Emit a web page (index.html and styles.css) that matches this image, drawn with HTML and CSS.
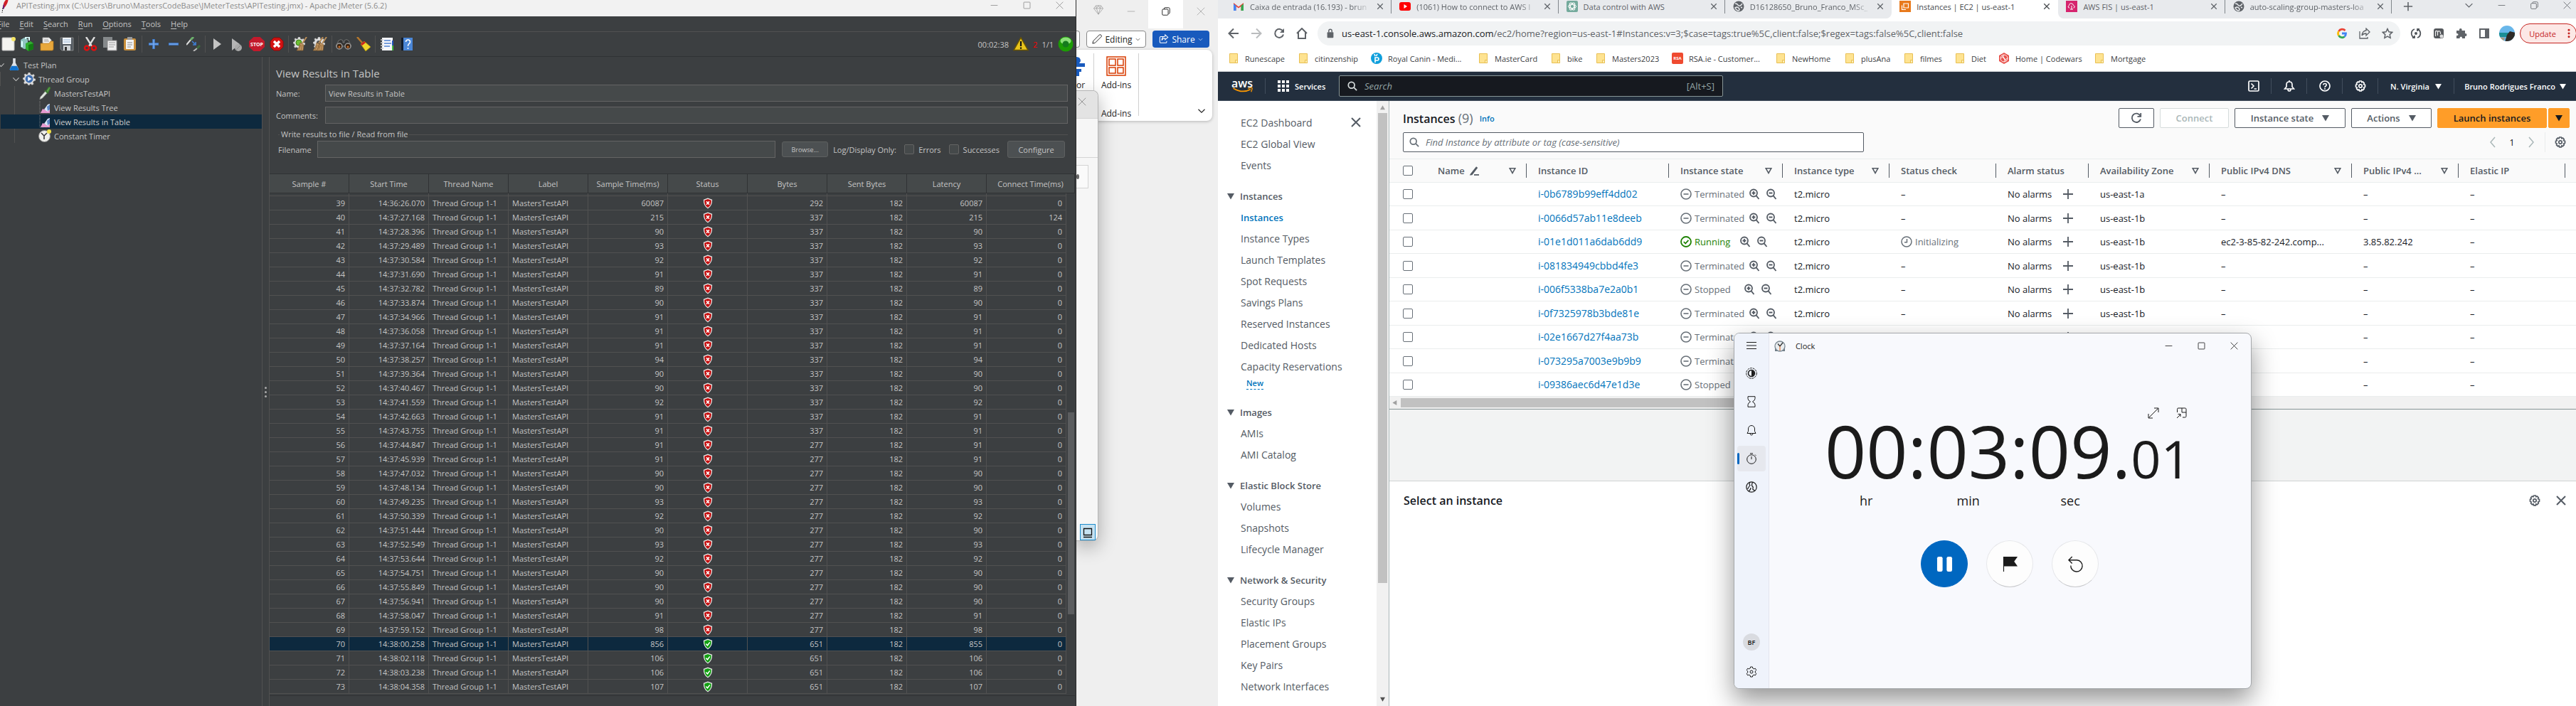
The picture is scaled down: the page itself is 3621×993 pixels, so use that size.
FILE: index.html
```html
<!DOCTYPE html>
<html lang="en">
<head>
<meta charset="utf-8">
<title>Desktop</title>
<link rel="stylesheet" href="styles.css">
</head>
<body>
<svg class="sprite" aria-hidden="true">
  <symbol id="i-x" viewBox="0 0 16 16"><path d="M2 2l12 12M14 2L2 14" fill="none" stroke="currentColor"/></symbol>
  <symbol id="i-xb" viewBox="0 0 16 16"><path d="M2 2l12 12M14 2L2 14" fill="none" stroke="currentColor" stroke-width="2"/></symbol>
  <symbol id="i-min" viewBox="0 0 16 16"><path d="M2 8h12" fill="none" stroke="currentColor"/></symbol>
  <symbol id="i-max" viewBox="0 0 16 16"><rect x="2.500" y="2.500" width="11" height="11" rx="1" fill="none" stroke="currentColor"/></symbol>
  <symbol id="i-restore" viewBox="0 0 16 16"><path d="M5 4.500V3.500Q5 2 6.500 2H12Q14 2 14 4v6q0 1.500-1.500 1.500" fill="none" stroke="currentColor"/><rect x="2" y="4.500" width="9.500" height="9.500" rx="1.500" fill="none" stroke="currentColor"/></symbol>
  <symbol id="i-chev" viewBox="0 0 16 16"><path d="M2 5l6 6 6-6" fill="none" stroke="currentColor" stroke-width="1.500"/></symbol>
  <symbol id="i-left" viewBox="0 0 16 16"><path d="M11 1L5 8l6 7" fill="none" stroke="currentColor" stroke-width="1.500"/></symbol>
  <symbol id="i-right" viewBox="0 0 16 16"><path d="M5 1l6 7-6 7" fill="none" stroke="currentColor" stroke-width="1.500"/></symbol>
  <symbol id="i-tri" viewBox="0 0 10 10"><path d="M0 1h10L5 9.500z" fill="currentColor"/></symbol>
  <symbol id="i-sort" viewBox="0 0 10 10"><path d="M1.200 1.800h7.600L5 8.500z" fill="none" stroke="currentColor" stroke-width="1.600"/></symbol>
  <symbol id="i-search" viewBox="0 0 16 16"><circle cx="6.500" cy="6.500" r="5" fill="none" stroke="currentColor" stroke-width="2"/><path d="M10.200 10.200L15 15" stroke="currentColor" stroke-width="2"/></symbol>
  <symbol id="i-gear" viewBox="0 0 16 16"><path d="M6.700 1h2.600l.5 1.700 1.600-.6 1.900 1.900-.7 1.600 1.900.8v2.900l-1.900.8.700 1.700-1.900 1.900-1.600-.7-.5 1.900H6.700l-.7-1.900-1.600.7-1.900-1.900.7-1.700-1.700-.8V6.400l1.700-.8-.7-1.600 1.900-1.900 1.600.6z" fill="none" stroke="currentColor" stroke-width="1.700"/><circle cx="8" cy="8" r="2.200" fill="none" stroke="currentColor" stroke-width="1.700"/></symbol>
  <symbol id="i-zin" viewBox="0 0 16 16"><circle cx="7" cy="6.500" r="5" fill="none" stroke="currentColor" stroke-width="1.800"/><path d="M10.500 10.200L14.500 15M4.500 6.500h5M7 4v5" stroke="currentColor" stroke-width="1.800"/></symbol>
  <symbol id="i-zout" viewBox="0 0 16 16"><circle cx="7" cy="6.500" r="5" fill="none" stroke="currentColor" stroke-width="1.800"/><path d="M10.500 10.200L14.500 15M4.500 6.500h5" stroke="currentColor" stroke-width="1.800"/></symbol>
  <symbol id="i-minus-c" viewBox="0 0 16 16"><circle cx="8" cy="8" r="7" fill="none" stroke="currentColor" stroke-width="1.600"/><path d="M4.500 8h7" stroke="currentColor" stroke-width="1.600"/></symbol>
  <symbol id="i-ok-c" viewBox="0 0 16 16"><circle cx="8" cy="8" r="7" fill="none" stroke="currentColor" stroke-width="1.800"/><path d="M4.800 8l2.400 2.500 4.200-4.700" fill="none" stroke="currentColor" stroke-width="1.800"/></symbol>
  <symbol id="i-clk-c" viewBox="0 0 16 16"><circle cx="8" cy="8" r="7" fill="none" stroke="currentColor" stroke-width="1.500"/><path d="M8.500 4v4.800H5" fill="none" stroke="currentColor" stroke-width="1.500"/></symbol>
  <symbol id="i-plus" viewBox="0 0 16 16"><path d="M8 1v14M1 8h14" stroke="currentColor" stroke-width="1.800"/></symbol>
  <symbol id="i-refresh" viewBox="0 0 16 16"><path d="M13.500 4.800A6.200 6.200 0 1 0 14 9.500" fill="none" stroke="currentColor" stroke-width="1.800"/><path d="M14.200 1v4.800H9.500" fill="none" stroke="currentColor" stroke-width="1.800"/></symbol>
  <symbol id="i-folder" viewBox="0 0 12 14"><path d="M.500.500h11v13H.500z" fill="#fee391" stroke="#e8bf52"/><path d="M8.500 13.500v-4h2l1 1.500v2.500z" fill="#fff0b8" stroke="#e8bf52"/></symbol>
  <symbol id="i-globe" viewBox="0 0 16 16"><circle cx="8" cy="8" r="7.500" fill="#5f6368"/><path d="M3 4q3 0 4 2t3 1 3-3M9 12q-1-3-4-3l-2 1q1 3 4 4 2 0 2-2zM11 9l2 1" fill="none" stroke="#e8eaed" stroke-width="1.500"/></symbol>
  <symbol id="i-bad" viewBox="0 0 16 18"><path d="M8 .500L15 3q.5 10-7 14.500Q.500 13 1 3z" fill="#e6e6e6"/><path d="M8 2.200L13.500 4q.3 8-5.500 11.800Q2.200 12 2.500 4z" fill="#c40d0d"/><path d="M5.700 6l4.600 5M10.300 6l-4.600 5" stroke="#fff" stroke-width="1.800"/></symbol>
  <symbol id="i-good" viewBox="0 0 16 18"><path d="M8 .500L15 3q.5 10-7 14.500Q.500 13 1 3z" fill="#e6e6e6"/><path d="M8 2.200L13.500 4q.3 8-5.500 11.800Q2.200 12 2.500 4z" fill="#12a012"/><path d="M5 8.500l2.400 2.500L11.200 6" fill="none" stroke="#fff" stroke-width="1.800"/></symbol>
  <symbol id="i-broom" viewBox="0 0 20 20"><path d="M19 0l-6 9" stroke="#b98d58" stroke-width="2"/><path d="M10 8l5 3-1 8H5q4-4 5-11z" fill="#c29763" stroke="#80592c" stroke-width=".7"/><path d="M11 11L8 18M13 11l-2 8" stroke="#8b6234" stroke-width=".8"/></symbol>
  <symbol id="i-cog" viewBox="0 0 20 20"><path d="M8.500 0h3l.6 2.800 2.300 1L17 2.500l1.500 2.500-1.800 2.200.6 2.100L20 10v2.500l-2.800.9-1.200 2 1 2.600-2.400 1.500-2.200-1.700-1.200.2L10.500 20h-2l-.9-2.200-2-.8L3 18l-1.500-2 1.300-2.600-.8-1.900L0 10.500v-2l2.400-.9.700-2L2 3.300 4 2l2.200 1.400 1.600-.7z" fill="#dedede" stroke="#8b8b8b" stroke-width=".6"/></symbol>
  <symbol id="i-graph" viewBox="0 0 18 18"><path d="M2 0v17h15" fill="none" stroke="#888" stroke-dasharray="1 1"/><path d="M3 17l3-6 4 2 3-4 3 2v6z" fill="#e79ad0"/><path d="M8 12L13 5l3-1v8l-3 3z" fill="#dbeafa"/><path d="M12 8l4-3v7l-3 2z" fill="#5c86c7"/></symbol>
  <symbol id="i-dropper" viewBox="0 0 18 20"><path d="M1 20l1-4L10 7l3 2.500L5 18z" fill="#dfe6df" stroke="#888" stroke-width=".7"/><path d="M8.500 5.500L14 10.500M11 7l4-6q2-1 2.500 1L14 9z" fill="#5ea04c" stroke="#3c7a32" stroke-width="1.300"/></symbol>
</svg>

<main class="desktop">
<!-- Apache JMeter -->
<section class="jm" aria-label="Apache JMeter">
  <header class="jm-title">
    <svg class="feather" viewBox="0 0 12 22"><path d="M10 0q3 0 0 7-3 6-6 7 0-9 6-14z" fill="#d22128"/><path d="M6 7q-3 4-2 8l2-1z" fill="#6d2077"/><path d="M4 13l-1 7" stroke="#333" stroke-dasharray="2 1"/></svg>
    <span class="jm-title-text">APITesting.jmx (C:\Users\Bruno\MastersCodeBase\JMeterTests\APITesting.jmx) - Apache JMeter (5.6.2)</span>
    <div class="win-btns"><button aria-label="Minimize"><svg><use href="#i-min"/></svg></button><button aria-label="Maximize"><svg><use href="#i-max"/></svg></button><button aria-label="Close"><svg><use href="#i-x"/></svg></button></div>
  </header>
  <nav class="jm-menu"><button><u>F</u>ile</button><button><u>E</u>dit</button><button><u>S</u>earch</button><button><u>R</u>un</button><button><u>O</u>ptions</button><button><u>T</u>ools</button><button><u>H</u>elp</button></nav>
  <div class="jm-tools">
    <button aria-label="New"><svg viewBox="0 0 20 20"><rect x="1" y="1" width="17" height="18" rx="1" fill="#f4f4f0" stroke="#bbb"/><circle cx="17" cy="3" r="3" fill="#f5e663"/></svg></button>
    <button aria-label="Templates"><svg viewBox="0 0 20 20"><path d="M1 4l5-3 5 2v13l-5 1-5-3z" fill="#8fc4c0"/><path d="M8 9l7-3 4 3v8l-7 3-4-3z" fill="#2fae2f"/><path d="M12 11l7-2v8l-7 3z" fill="#137a13"/><path d="M3 6v8M8 3V1l5-1v5" stroke="#dff" stroke-width="2" fill="none"/></svg></button>
    <button aria-label="Open"><svg viewBox="0 0 20 20"><path d="M4 1h9l3 3v8H4z" fill="#f3f3f3" stroke="#aaa"/><path d="M6 4h6M6 6h7" stroke="#999"/><path d="M1 9h12l2-3h4v11q0 2-2 2H1z" fill="#e8a83c" stroke="#b97a18" stroke-width=".7"/></svg></button>
    <button aria-label="Save"><svg viewBox="0 0 20 20"><path d="M1 1h18v18H3l-2-2z" fill="#555c63" stroke="#999" stroke-width=".7"/><rect x="4" y="1" width="12" height="9" fill="#f0f4f8"/><path d="M5 4h10M5 7h10" stroke="#9bb8d8"/><rect x="5" y="12" width="10" height="7" fill="#cfd3d6"/><rect x="7" y="14" width="3" height="5" fill="#333"/></svg></button>
    <i></i>
    <button aria-label="Cut"><svg viewBox="0 0 20 20"><path d="M4 0q4 6 8 13M16 0q-4 6-8 13" stroke="#ddd" stroke-width="2.400" fill="none"/><circle cx="5" cy="15.500" r="3" fill="none" stroke="#d11" stroke-width="2.500"/><circle cx="15" cy="15.500" r="3" fill="none" stroke="#d11" stroke-width="2.500"/></svg></button>
    <button aria-label="Copy"><svg viewBox="0 0 20 20"><rect x="0" y="0" width="13" height="15" fill="#85898b"/><path d="M6 5h13v14H6z" fill="#eee" stroke="#888"/><path d="M8 8h9M8 11h9M8 14h7" stroke="#999"/></svg></button>
    <button aria-label="Paste"><svg viewBox="0 0 20 20"><rect x="1" y="2" width="17" height="17" rx="2" fill="#c98f3c"/><rect x="4" y="4" width="11" height="13" fill="#f4f4f4"/><rect x="6" y="0" width="7" height="4" fill="#999"/><path d="M6 8h7M6 11h7M6 14h5" stroke="#888"/></svg></button>
    <i></i>
    <button aria-label="Expand"><svg viewBox="0 0 20 20"><path d="M10 3v14M3 10h14" stroke="#3f7fd4" stroke-width="3.500"/><path d="M10 4v12M4 10h12" stroke="#8fb9f0"/></svg></button>
    <button aria-label="Collapse"><svg viewBox="0 0 20 20"><path d="M3 10h14" stroke="#3f7fd4" stroke-width="3.500"/><path d="M4 10h12" stroke="#8fb9f0"/></svg></button>
    <button aria-label="Toggle"><svg viewBox="0 0 20 20"><path d="M0 11L6 4" stroke="#ddd" stroke-width="2"/><path d="M6 4l4-4" stroke="#6bb06b" stroke-width="3"/><path d="M8 6l5 5M13 7v4H9" stroke="#3f7fd4" stroke-width="1.600" fill="none"/><path d="M10 20l5-4" stroke="#bbb" stroke-width="2"/><path d="M15 16l4-4" stroke="#3c6b3c" stroke-width="3"/></svg></button>
    <i></i>
    <button aria-label="Start"><svg viewBox="0 0 20 20"><path d="M5 2l11 8-11 8z" fill="#c4c4c4"/></svg></button>
    <button aria-label="Start no pauses"><svg viewBox="0 0 20 20"><path d="M3 2l11 8-11 9z" fill="#b5b5b5"/><circle cx="12" cy="15" r="5" fill="#aaa"/><path d="M9 18l6-6" stroke="#888"/></svg></button>
    <button aria-label="Stop"><svg class="wide" viewBox="0 0 22 20"><path d="M6.500 0h9L22 6v8l-6.500 6h-9L0 14V6z" fill="#c31a2c"/><text x="11" y="13" text-anchor="middle" class="stop-t">STOP</text></svg></button>
    <button aria-label="Shutdown"><svg viewBox="0 0 20 20"><path d="M6 1h8l5 5v8l-5 5H6l-5-5V6z" fill="#d31212" stroke="#8d0808"/><path d="M6 6l8 8M14 6l-8 8" stroke="#fff" stroke-width="3.500"/></svg></button>
    <i></i>
    <button aria-label="Clear"><svg viewBox="0 0 20 20"><use href="#i-cog" width="17" height="17"/><circle cx="8" cy="8" r="4" fill="#6cbf34" stroke="#3d7c14"/><use href="#i-broom"/></svg></button>
    <button aria-label="Clear all"><svg viewBox="0 0 20 20"><use href="#i-cog" width="17" height="17"/><circle cx="8" cy="8" r="3" fill="#555"/><use href="#i-broom" x="-5"/><use href="#i-broom"/></svg></button>
    <i></i>
    <button aria-label="Search"><svg class="wide" viewBox="0 0 22 20"><path d="M4 5q3-3 6 0v3h2V5q3-3 6 0l4 8H0z" fill="#333" stroke="#888" stroke-width=".7"/><circle cx="5" cy="13" r="4" fill="#3b2412" stroke="#999" stroke-width="1.500"/><circle cx="17" cy="13" r="4" fill="#3b2412" stroke="#999" stroke-width="1.500"/><circle cx="5" cy="14" r="1.500" fill="#c86f2c"/><circle cx="17" cy="14" r="1.500" fill="#c86f2c"/></svg></button>
    <button aria-label="Reset search"><svg viewBox="0 0 20 20"><path d="M1 0l7 8" stroke="#b5772c" stroke-width="2.500"/><path d="M6 10l5-4 9 8-7 6z" fill="#efd62b" stroke="#a98d00" stroke-width=".7"/><path d="M6 10l5-4 2 2-5 4z" fill="#c22"/></svg></button>
    <i></i>
    <button aria-label="Function helper"><svg viewBox="0 0 20 20"><rect x="3" y="1" width="15" height="18" fill="#f6f8fc"/><path d="M6 5h9M6 9h10M6 13h8" stroke="#4c7fd0" stroke-width="1.500"/><path d="M1 4h4M1 8h4M1 12h4M1 16h4" stroke="#ccc" stroke-width="1.500"/><path d="M18 5v7" stroke="#2255bb" stroke-width="2"/><path d="M18 12v7" stroke="#4b4" stroke-width="2"/></svg></button>
    <button aria-label="Help"><svg viewBox="0 0 20 20"><path d="M2 1h16v18H2z" fill="#4a86d6"/><path d="M2 1h3v18H2z" fill="#111d2e"/><path d="M8.500 7q0-3 3-3t3 3q0 2-2 3-1 1-1 3" fill="none" stroke="#fff" stroke-width="1.500"/><circle cx="11.500" cy="16" r="1" fill="#fff"/></svg></button>
    <div class="jm-stat"><span>00:02:38</span>
      <svg viewBox="0 0 22 20"><path d="M11 1l10 17.500H1z" fill="#e8c41c" stroke="#6b5500" stroke-width="1.500"/><path d="M11 6v7M11 14.500v2.200" stroke="#111" stroke-width="2.200"/></svg>
      <span class="err">2</span><span>1/1</span>
      <svg class="led" viewBox="0 0 22 22"><circle cx="11" cy="11" r="10.500" fill="#1c9c05"/><ellipse cx="11" cy="6.500" rx="7.500" ry="5" fill="#8be079"/><circle cx="11" cy="11" r="4.500" fill="#157a1e"/></svg>
    </div>
  </div>
  <div class="jm-body">
    <ul class="tree">
      <li class="d0"><svg class="tw"><use href="#i-chev"/></svg><svg viewBox="0 0 16 20"><path d="M6 0h4v7l5 10q0 2-2 2H3q-2 0-2-2l5-10z" fill="#dfe3e8"/><path d="M4 12h8l3 5q0 2-2 2H3q-2 0-2-2z" fill="#1173cf"/></svg>Test Plan</li>
      <li class="d1"><svg class="tw"><use href="#i-chev"/></svg><svg viewBox="0 0 20 20"><use href="#i-cog"/><circle cx="10" cy="10" r="6" fill="#3d6db0"/><path d="M8 6.500l6 3.500-6 3.500z" fill="#e8f0fa"/></svg>Thread Group</li>
      <li class="d2"><svg><use href="#i-dropper"/></svg>MastersTestAPI</li>
      <li class="d2"><svg><use href="#i-graph"/></svg>View Results Tree</li>
      <li class="d2 on"><svg><use href="#i-graph"/></svg>View Results in Table</li>
      <li class="d2"><svg viewBox="0 0 18 18"><circle cx="8.500" cy="9.500" r="8" fill="#efefec" stroke="#8a8a8a"/><path d="M4 5l4 4v5M8 9l4-4" stroke="#333" stroke-width="1.500" fill="none"/><circle cx="15" cy="3" r="3" fill="#efe04a"/></svg>Constant Timer</li>
    </ul>
    <div class="grip"><i></i><i></i><i></i></div>
    <div class="jm-main">
      <h1>View Results in Table</h1>
      <div class="frow"><label for="nm">Name:</label><input id="nm" value="View Results in Table"></div>
      <div class="frow"><label for="cm">Comments:</label><input id="cm"></div>
      <fieldset class="wr"><legend>Write results to file / Read from file</legend>
        <label for="fn">Filename</label><input id="fn" class="fn"><button class="jbtn small">Browse...</button>
        <span class="log">Log/Display Only:</span>
        <label class="ck"><input type="checkbox">Errors</label><label class="ck">
        <input type="checkbox">Successes</label><button class="jbtn">Configure</button>
      </fieldset>
      <div class="res-wrap">
        <table class="res"><colgroup><col><col><col><col><col><col><col><col><col><col><col class="sb"></colgroup>
          <thead><tr><th>Sample #</th><th>Start Time</th><th>Thread Name</th><th>Label</th><th>Sample Time(ms)</th><th>Status</th><th>Bytes</th><th>Sent Bytes</th><th>Latency</th><th colspan="2" class="last">Connect Time(ms)</th></tr></thead>
          <tbody id="samples"></tbody>
        </table>
        <div class="res-thumb"></div>
      </div>
    </div>
  </div>
</section>

<!-- Word window behind -->
<section class="word" aria-label="Word">
  <div class="w-title"><svg class="gem" viewBox="0 0 16 16"><path d="M4 1h8l3.500 4.500L8 15 .5 5.500zM.5 5.500h15M5 5.500L8 15l3-9.500L8 1zM4 1l1 4.500M12 1l-1 4.500" fill="none" stroke="#999" stroke-width=".8"/></svg><button aria-label="Minimize"><svg><use href="#i-min"/></svg></button><button class="lit" aria-label="Restore"><svg><use href="#i-restore"/></svg></button><button aria-label="Close"><svg><use href="#i-x"/></svg></button></div>
  <div class="w-bar"><button class="stub" aria-label="Comments"></button><button class="edit"><svg viewBox="0 0 16 16"><path d="M1 15l1-4L12 1q2-.5 3 1t0 2L5 14z" fill="none" stroke="#222" stroke-width="1.100"/></svg>Editing<svg class="cv"><use href="#i-chev"/></svg></button><button class="share"><svg viewBox="0 0 16 16"><path d="M7 4H3q-1.500 0-1.500 1.500v7Q1.500 14 3 14h8q1.500 0 1.500-1.500V11M10 1l4.500 4L10 9V6.500Q6 6.500 4.500 10 5 4 10 3.500z" fill="none" stroke="#fff" stroke-width="1.200"/></svg>Share<svg class="cv"><use href="#i-chev"/></svg></button></div>
  <div class="w-ribbon">
    <div class="w-ed"><svg viewBox="0 0 12 28"><path d="M0 1q6 0 6 6l-2 3h8v5H0zM0 18h7v4H4v6H0z" fill="#185abd"/></svg><span>or</span></div>
    <div class="w-add"><svg viewBox="0 0 28 28"><path d="M1 1h26v26H1zM4 4h9v9H4zM16 4h8v9h-8zM4 16h9v8H4zM16 16h8v8h-8z" fill="none" stroke="#d83b01" stroke-width="1.500"/></svg><span>Add-ins</span><span class="g">Add-ins</span></div>
    <svg class="w-chev"><use href="#i-chev"/></svg>
  </div>
  <div class="pop"><div class="pop-h"><svg><use href="#i-x"/></svg></div><div class="pop-l"></div><div class="pop-b"><i></i></div><button class="pop-k" aria-label="Display"><svg viewBox="0 0 16 16"><path d="M2.500 2.500h11v9h-11zM2 14.500h12" fill="none" stroke="#111" stroke-width="1.300"/></svg></button></div>
</section>

<!-- Chrome -->
<section class="chrome" aria-label="Chrome">
  <div class="tabstrip">
    <div class="tabs">
      <div class="tab"><svg viewBox="0 0 16 16"><path d="M1 14V3l7 5.500L15 3v11h-3.500V8L8 10.500 4.500 8v6z" fill="#ea4335"/><path d="M1 4.500V14h3.500V7z" fill="#4285f4"/><path d="M15 4.500V14h-3.500V7z" fill="#34a853"/></svg><span class="fade">Caixa de entrada (16.193) - brun</span><button aria-label="Close tab"><svg><use href="#i-xb"/></svg></button></div>
      <div class="tab"><svg viewBox="0 0 16 16"><rect y="2" width="16" height="12" rx="3" fill="#f00"/><path d="M6.500 5v6l4.500-3z" fill="#fff"/></svg><span class="fade">(1061) How to connect to AWS I</span><button aria-label="Close tab"><svg><use href="#i-xb"/></svg></button></div>
      <div class="tab"><svg viewBox="0 0 16 16"><rect width="16" height="16" rx="2" fill="#74aa9c"/><g fill="none" stroke="#fff"><ellipse cx="8" cy="8" rx="5.500" ry="2.700"/><ellipse cx="8" cy="8" rx="5.500" ry="2.700" transform="rotate(60 8 8)"/><ellipse cx="8" cy="8" rx="5.500" ry="2.700" transform="rotate(120 8 8)"/></g></svg><span>Data control with AWS</span><button aria-label="Close tab"><svg><use href="#i-xb"/></svg></button></div>
      <div class="tab nosep"><svg><use href="#i-globe"/></svg><span class="fade">D16128650_Bruno_Franco_MSc_</span><button aria-label="Close tab"><svg><use href="#i-xb"/></svg></button></div>
      <div class="tab active"><svg viewBox="0 0 16 16"><rect width="16" height="16" fill="#e8791b"/><path d="M6 4h6.500v6H6zM9 12.500H3.500v-6" fill="none" stroke="#fff" stroke-width="1.200"/></svg><span>Instances | EC2 | us-east-1</span><button aria-label="Close tab"><svg><use href="#i-xb"/></svg></button></div>
      <div class="tab"><svg viewBox="0 0 16 16"><rect width="16" height="16" fill="#d6246e"/><path d="M5 10H4q-2-2 .5-3.500Q5 3 8 4q2 0 2.500 2.500 3 1 1 3.500h-1M8 7v5M6 12h4" fill="none" stroke="#fff"/></svg><span>AWS FIS | us-east-1</span><button aria-label="Close tab"><svg><use href="#i-xb"/></svg></button></div>
      <div class="tab"><svg><use href="#i-globe"/></svg><span class="fade">auto-scaling-group-masters-loa</span><button aria-label="Close tab"><svg><use href="#i-xb"/></svg></button></div>
    </div>
    <button class="newtab" aria-label="New tab"><svg><use href="#i-plus"/></svg></button>
    <div class="win-btns"><button aria-label="Search tabs"><svg><use href="#i-chev"/></svg></button><button aria-label="Minimize"><svg><use href="#i-min"/></svg></button><button aria-label="Restore"><svg><use href="#i-restore"/></svg></button><button aria-label="Close"><svg><use href="#i-x"/></svg></button></div>
  </div>
  <div class="navbar">
    <button aria-label="Back"><svg viewBox="0 0 16 16"><path d="M15 8H2M8 1.500L1.500 8 8 14.500" fill="none" stroke="#5f6368" stroke-width="2"/></svg></button>
    <button aria-label="Forward"><svg viewBox="0 0 16 16"><path d="M1 8h13M8 1.500L14.500 8 8 14.500" fill="none" stroke="#babcbe" stroke-width="2"/></svg></button>
    <button aria-label="Reload"><svg viewBox="0 0 16 16"><path d="M13.500 5A6 6 0 1 0 14 9.500" fill="none" stroke="#5f6368" stroke-width="2"/><path d="M15 1v6H9z" fill="#5f6368"/></svg></button>
    <button aria-label="Home"><svg viewBox="0 0 16 16"><path d="M1 8l7-7 7 7M3 6.500V15h10V6.500" fill="none" stroke="#5f6368" stroke-width="2"/></svg></button>
    <div class="omni">
      <svg class="lock" viewBox="0 0 12 16"><rect x="1" y="6" width="10" height="9" rx="1" fill="#5f6368"/><path d="M3.500 6V4a2.500 2.500 0 0 1 5 0v2" fill="none" stroke="#5f6368" stroke-width="1.700"/></svg>
      <span class="url"><b>us-east-1.console.aws.amazon.com</b>/ec2/home?region=us-east-1#Instances:v=3;$case=tags:true%5C,client:false;$regex=tags:false%5C,client:false</span>
      <button aria-label="Google"><svg viewBox="0 0 16 16"><g fill="none" stroke-width="2.800"><path d="M12.500 4A5.500 5.500 0 0 0 3.500 5" stroke="#ea4335"/><path d="M3.500 5a5.500 5.500 0 0 0 0 6" stroke="#fbbc05"/><path d="M3.500 11a5.500 5.500 0 0 0 8.200 1.500" stroke="#34a853"/><path d="M8 8h5.500q0 3-1.800 4.500" stroke="#4285f4"/></g></svg></button>
      <button aria-label="Share"><svg viewBox="0 0 16 16"><path d="M1 5v10h11v-2M15 6l-5-5v3Q5 4 4 11q2-3 6-3v3z" fill="none" stroke="#5f6368" stroke-width="1.300"/></svg></button>
      <button aria-label="Bookmark"><svg viewBox="0 0 16 16"><path d="M8 1.500l2 4.300 4.700.6-3.500 3.200.9 4.700L8 12l-4.100 2.300.9-4.700L1.300 6.400 6 5.800z" fill="none" stroke="#5f6368" stroke-width="1.500"/></svg></button>
    </div>
    <div class="exts">
      <button aria-label="Sync"><svg viewBox="0 0 16 16"><path d="M6 2a6.300 6.300 0 0 0-1 11.500M3 14h3v-3M10 14a6.300 6.300 0 0 0 1-11.500M13 2h-3v3" fill="none" stroke="#50545a" stroke-width="1.800"/><circle cx="8" cy="8" r="2" fill="#50545a"/></svg></button>
      <button aria-label="Extension"><svg viewBox="0 0 16 16"><rect x="1" y="1" width="14" height="14" rx="3" fill="#55585c"/><path d="M3.500 12V5q3-2 3 2v4V6q3-3 4 1v2" fill="none" stroke="#eee" stroke-width="1.200"/><circle cx="12" cy="12" r="2.500" fill="#ddd"/></svg></button>
      <button aria-label="Extensions"><svg viewBox="0 0 16 16"><path d="M1 4h4q-.5-3 1.800-3T8.500 4H13v4.200q2.500-.5 2.500 1.800T13 11.800V15H9q.3-2.500-1.700-2.500T5.500 15H1v-4q2.500.3 2.500-1.500T1 8z" fill="#5f6368"/></svg></button>
      <button aria-label="Side panel"><svg viewBox="0 0 16 16"><path d="M2 2h12v12H2z" fill="none" stroke="#5f6368" stroke-width="2"/><path d="M9 2h5v12H9z" fill="#5f6368"/></svg></button>
      <button aria-label="Profile"><svg class="ava" viewBox="0 0 24 24"><clipPath id="av"><circle cx="12" cy="12" r="11"/></clipPath><g clip-path="url(#av)"><path d="M0 0h24v24H0z" fill="#69b7ea"/><path d="M0 11h24v6H0z" fill="#1b8e95"/><path d="M9 24l3-10 4-5 8 2v13z" fill="#2f2c28"/><path d="M0 17l9 1-2 6H0z" fill="#a79b82"/></g></svg></button>
      <button class="update">Update<svg viewBox="0 0 4 16"><circle cx="2" cy="2.500" r="1.700"/><circle cx="2" cy="8" r="1.700"/><circle cx="2" cy="13.500" r="1.700"/></svg></button>
    </div>
  </div>
  <nav class="marks">
    <a href="#"><svg><use href="#i-folder"/></svg>Runescape</a>
    <a href="#"><svg><use href="#i-folder"/></svg>citinzenship</a>
    <a href="#" class="fav"><svg viewBox="0 0 16 16"><circle cx="8" cy="8" r="8" fill="#0f9fdc"/><path d="M6 14V7h3q2 0 2 2t-2 2H6M5 2l1 3M9 2L7.500 5" fill="none" stroke="#fff" stroke-width="1.600"/></svg>Royal Canin - Medi...</a>
    <a href="#"><svg><use href="#i-folder"/></svg>MasterCard</a>
    <a href="#"><svg><use href="#i-folder"/></svg>bike</a>
    <a href="#"><svg><use href="#i-folder"/></svg>Masters2023</a>
    <a href="#" class="fav"><svg viewBox="0 0 16 16"><rect width="16" height="16" rx="2" fill="#ef4a30"/><text x="8" y="10" text-anchor="middle" class="rsa">RSA</text></svg>RSA.ie - Customer...</a>
    <a href="#"><svg><use href="#i-folder"/></svg>NewHome</a>
    <a href="#"><svg><use href="#i-folder"/></svg>plusAna</a>
    <a href="#"><svg><use href="#i-folder"/></svg>filmes</a>
    <a href="#"><svg><use href="#i-folder"/></svg>Diet</a>
    <a href="#" class="fav"><svg viewBox="0 0 16 16"><path d="M8 0l7 4v8l-7 4-7-4V4z" fill="#e8524c"/><g fill="none" stroke="#fff" stroke-width=".9"><circle cx="8" cy="8" r="5"/><path d="M8 3q-3 3 0 5t0 5M3 8q3-3 5 0t5 0M4.500 4.500Q8 5 8 8t3.500 3.500"/></g></svg>Home | Codewars</a>
    <a href="#"><svg><use href="#i-folder"/></svg>Mortgage</a>
  </nav>

  <header class="aws">
    <a href="#" class="logo" aria-label="aws"><span>aws</span><svg viewBox="0 0 32 10"><path d="M1 1q14 9 27 2" fill="none" stroke="#f90" stroke-width="2"/><path d="M24 1.500q6-1.500 6.500-.5T29 7" fill="none" stroke="#f90" stroke-width="1.500"/></svg></a>
    <button class="svc"><svg viewBox="0 0 16 16"><path d="M0 0h4v4H0zM6 0h4v4H6zM12 0h4v4h-4zM0 6h4v4H0zM6 6h4v4H6zM12 6h4v4h-4zM0 12h4v4H0zM6 12h4v4H6zM12 12h4v4h-4z" fill="#fff"/></svg>Services</button>
    <div class="aws-search"><svg><use href="#i-search"/></svg><input aria-label="Search" placeholder="Search"><span>[Alt+S]</span></div>
    <div class="aws-r">
      <button aria-label="CloudShell"><svg viewBox="0 0 16 16"><rect x="1" y="1" width="14" height="14" rx="1.500" fill="none" stroke="#fff" stroke-width="1.700"/><path d="M4.500 4.500L8 8l-3.500 3.500M8.500 12H12" fill="none" stroke="#fff" stroke-width="1.600"/></svg></button>
      <button aria-label="Notifications"><svg viewBox="0 0 16 16"><path d="M1.500 12L4 9V6q0-4 4-4t4 4v3l2.500 3zM6 12.500q0 2.500 2 2.500t2-2.500M8 0v2" fill="none" stroke="#fff" stroke-width="1.700"/></svg></button>
      <button aria-label="Help"><svg viewBox="0 0 16 16"><circle cx="8" cy="8" r="7" fill="none" stroke="#fff" stroke-width="1.700"/><path d="M5.800 6.500Q5.800 4.500 8 4.500t2.200 2q0 1-1.200 1.700T8 10" fill="none" stroke="#fff" stroke-width="1.600"/><circle cx="8" cy="12" r="1" fill="#fff"/></svg></button>
      <button aria-label="Settings"><svg><use href="#i-gear"/></svg></button>
      <button class="reg">N. Virginia<svg><use href="#i-tri"/></svg></button>
      <button class="usr">Bruno Rodrigues Franco<svg><use href="#i-tri"/></svg></button>
    </div>
  </header>

  <div class="console">
    <nav class="side">
      <button class="side-x" aria-label="Close"><svg><use href="#i-xb"/></svg></button>
      <a href="#">EC2 Dashboard</a><a href="#">EC2 Global View</a><a href="#">Events</a>
      <h3><svg><use href="#i-tri"/></svg>Instances</h3>
      <a href="#" class="cur">Instances</a><a href="#">Instance Types</a><a href="#">Launch Templates</a><a href="#">Spot Requests</a><a href="#">Savings Plans</a><a href="#">Reserved Instances</a><a href="#">Dedicated Hosts</a><a href="#">Capacity Reservations</a>
      <div class="new"><span>New</span></div>
      <h3><svg><use href="#i-tri"/></svg>Images</h3>
      <a href="#">AMIs</a><a href="#">AMI Catalog</a>
      <h3><svg><use href="#i-tri"/></svg>Elastic Block Store</h3>
      <a href="#">Volumes</a><a href="#">Snapshots</a><a href="#">Lifecycle Manager</a>
      <h3><svg><use href="#i-tri"/></svg>Network &amp; Security</h3>
      <a href="#">Security Groups</a><a href="#">Elastic IPs</a><a href="#">Placement Groups</a><a href="#">Key Pairs</a><a href="#">Network Interfaces</a>
    </nav>
    <div class="vbar"><svg class="up"><use href="#i-tri"/></svg><i></i><svg><use href="#i-tri"/></svg></div>
    <div class="ec2">
      <div class="ec2-head">
        <div class="hrow"><h2>Instances <span>(9)</span></h2><a href="#" class="info">Info</a>
          <div class="acts"><button class="btn ref" aria-label="Refresh"><svg><use href="#i-refresh"/></svg></button><button class="btn conn" disabled>Connect</button><button class="btn st">Instance state<svg><use href="#i-tri"/></svg></button><button class="btn ac">Actions<svg><use href="#i-tri"/></svg></button><span class="split"><button class="btn pri la">Launch instances</button><button class="btn pri dd" aria-label="More"><svg><use href="#i-tri"/></svg></button></span></div>
        </div>
        <div class="hrow"><div class="find"><svg><use href="#i-search"/></svg><input aria-label="Find Instance" placeholder="Find Instance by attribute or tag (case-sensitive)"></div>
          <div class="pager"><button aria-label="Previous"><svg><use href="#i-left"/></svg></button><b>1</b><button aria-label="Next"><svg><use href="#i-right"/></svg></button><button class="cfg" aria-label="Preferences"><svg><use href="#i-gear"/></svg></button></div></div>
      </div>
      <table class="inst"><colgroup><col class="c0"><col class="c1"><col class="c2"><col class="c3"><col class="c4"><col class="c4"><col class="c6"><col class="c7"><col class="c2"><col class="c4"><col class="c4"><col></colgroup>
        <thead><tr><th class="lt"><input type="checkbox" aria-label="Select all"></th><th><div>Name<svg class="pen" viewBox="0 0 16 16"><path d="M2 13.500L11.500 1.500l2.500 2L5 15l-4 .5z" fill="currentColor"/><path d="M8 14.800h8" stroke="currentColor" stroke-width="2"/></svg><svg class="so"><use href="#i-sort"/></svg></div></th><th><div>Instance ID</div></th><th><div>Instance state<svg class="so"><use href="#i-sort"/></svg></div></th><th><div>Instance type<svg class="so"><use href="#i-sort"/></svg></div></th><th><div>Status check</div></th><th><div>Alarm status</div></th><th><div>Availability Zone<svg class="so"><use href="#i-sort"/></svg></div></th><th><div>Public IPv4 DNS<svg class="so"><use href="#i-sort"/></svg></div></th><th><div>Public IPv4 ...<svg class="so"><use href="#i-sort"/></svg></div></th><th><div>Elastic IP</div></th><th class="end"></th></tr></thead>
        <tbody id="instances"></tbody>
      </table>
      <div class="hbar"><svg><use href="#i-tri"/></svg><i></i></div>
      <div class="gapband"></div>
      <div class="panel"><h2>Select an instance</h2><button aria-label="Panel settings"><svg><use href="#i-gear"/></svg></button><button aria-label="Close panel"><svg><use href="#i-xb"/></svg></button></div>
    </div>
  </div>
</section>

<!-- Clock -->
<section class="clock" aria-label="Clock">
  <nav class="ck-side">
    <button class="menu" aria-label="Menu"><svg viewBox="0 0 16 16"><path d="M1 3.500h14M1 8h14M1 12.500h14" stroke="currentColor"/></svg></button>
    <button aria-label="Focus"><svg viewBox="0 0 16 16"><circle cx="8" cy="8" r="7.300" fill="none" stroke="currentColor" stroke-dasharray="3 1"/><circle cx="8" cy="8" r="4.500" fill="none" stroke="currentColor" stroke-width="1.500"/><path d="M8 4a4 4 0 0 1 0 8z" fill="currentColor"/></svg></button>
    <button aria-label="Timer"><svg viewBox="0 0 16 16"><path d="M3 .700h10v3Q13 6 9.500 8q3.500 2 3.500 4.300v3H3v-3Q3 10 6.500 8 3 6 3 3.700z" fill="none" stroke="currentColor"/></svg></button>
    <button aria-label="Alarm"><svg viewBox="0 0 16 16"><path d="M2 12.500l1.500-3V6a4.500 4.500 0 0 1 9 0v3.500l1.500 3zM6 13q.5 2 2 2t2-2" fill="none" stroke="currentColor"/></svg></button>
    <button class="on" aria-label="Stopwatch"><svg viewBox="0 0 16 16"><circle cx="8" cy="9" r="6.300" fill="none" stroke="currentColor"/><path d="M8 5v4M6 .800h4M13 2.500l1.300 1.300" stroke="currentColor"/></svg></button>
    <button aria-label="World clock"><svg viewBox="0 0 16 16"><circle cx="8" cy="8" r="7.200" fill="none" stroke="currentColor" stroke-width="1.200"/><path d="M6 1.500Q4 4 6 5.500 4 8 2.500 11M9.500 1q-1 3-1 5Q11 8 10 10t3 3M4 14q3-2 3-5" fill="none" stroke="currentColor" stroke-width="1.200"/></svg></button>
    <span class="bf">BF</span>
    <button aria-label="Settings"><svg class="thin" viewBox="0 0 16 16"><path d="M6.600 1h2.800l.5 2 1.500.8 2-.6 1.400 2.400L13.300 7v2l1.500 1.400-1.400 2.400-2-.6-1.500.8-.5 2H6.600l-.5-2-1.500-.8-2 .6-1.400-2.400L2.700 9V7L1.200 5.600l1.400-2.400 2 .6L6.100 3z" fill="none" stroke="currentColor"/><circle cx="8" cy="8" r="2" fill="none" stroke="currentColor"/></svg></button>
  </nav>
  <div class="ck-main">
    <header><svg class="appic" viewBox="0 0 16 16"><path d="M1 9v6h14V9z" fill="#6d7b85"/><circle cx="8" cy="8" r="7" fill="#e9edf0" stroke="#7b8892" stroke-width="1.300"/><path d="M5 4.500L8 8l4-5" fill="none" stroke="#333" stroke-width="1.300"/><path d="M8 8v6" stroke="#e57e44" stroke-width="1.300"/></svg><span>Clock</span><div class="win-btns"><button aria-label="Minimize"><svg><use href="#i-min"/></svg></button><button aria-label="Maximize"><svg><use href="#i-max"/></svg></button><button aria-label="Close"><svg><use href="#i-x"/></svg></button></div></header>
    <div class="ck-tools"><button aria-label="Expand"><svg viewBox="0 0 16 16"><path d="M1.500 14.500l13-13M9 1h6v6M1 9v6h6" fill="none" stroke="currentColor"/></svg></button><button aria-label="Keep on top"><svg viewBox="0 0 16 16"><path d="M1.500 7V2.500q0-1.500 1.500-1.500h9.500Q14 1 14 2.500v10q0 1.500-1.500 1.500H9M8 1v6h6M1 15l5-5M2.500 9.500H6V13" fill="none" stroke="currentColor"/></svg></button></div>
    <div class="time"><span>00</span><span>:</span><span>03</span><span>:</span><span>09</span><span>.</span><span class="cs">01</span><small class="u1">hr</small><small class="u2">min</small><small class="u3">sec</small></div>
    <div class="ctl"><button class="go" aria-label="Pause"><svg viewBox="0 0 24 24"><rect x="1" y="1" width="8" height="22" rx="2.500" fill="#fff"/><rect x="15" y="1" width="8" height="22" rx="2.500" fill="#fff"/></svg></button><button aria-label="Lap"><svg viewBox="0 0 24 24"><path d="M2 1h21l-5 7 5 7H3.200v8H2z" fill="#1b1b1b"/></svg></button><button aria-label="Reset"><svg viewBox="0 0 24 24"><path d="M7 1L2 6l5 5M2.500 6H14a8.500 8.500 0 1 1-9 8" fill="none" stroke="#1b1b1b" stroke-width="1.400"/></svg></button></div>
  </div>
</section>
</main>
<script src="app.js"></script>
</body>
</html>
```
FILE: styles.css
```css
* { box-sizing: border-box; }
body { margin: 0; font-family: "Open Sans", "Noto Sans", sans-serif; font-size: 11px; }
button { font: inherit; color: inherit; background: none; border: 0; padding: 0; display: inline-flex; align-items: center; justify-content: center; white-space: nowrap; }
input { font: inherit; color: inherit; min-width: 0; }
a { color: inherit; text-decoration: none; }
svg { display: block; flex: none; width: 16px; height: 16px; }
h1, h2, h3, ul { margin: 0; padding: 0; }
.sprite { position: absolute; width: 0; height: 0; }
.desktop { position: relative; display: grid; grid-template-columns: 1513fr 199fr 1909fr; height: 100vh; overflow: hidden; }
.win-btns { display: flex; margin-left: auto; }
.win-btns button { width: 46px; }
.win-btns svg { width: 13px; height: 13px; }

/* JMeter */
.jm { display: flex; flex-direction: column; min-width: 0; background: #3c3f41; color: #c4c4c4; border-right: 1px solid #2b2b2b; position: relative; z-index: 2; }
.jm-title { display: flex; height: 23px; background: #f2f2f2; color: #8b8b8b; line-height: 16px; }
.jm-title .feather { width: 12px; height: 22px; margin-right: 11px; margin-top: -2px; }
.jm-title .win-btns button { height: 15px; }
.jm-menu { display: flex; gap: 14px; height: 22px; border-bottom: 1px solid #515151; }
.jm-menu button:first-child { margin-left: -4px; }
.jm-menu u { text-underline-offset: 2px; }
.jm-tools { display: flex; align-items: center; height: 35px; border-bottom: 1px solid #303234; }
.jm-tools button { width: 28px; height: 24px; }
.jm-tools button:first-child { width: 24px; }
.jm-tools button svg { width: 20px; height: 20px; }
.jm-tools button .wide { width: 22px; }
.jm-tools i { width: 1px; height: 24px; background: #515151; margin: 0 2px; }
.stop-t { font: 700 7px "Open Sans", sans-serif; fill: #fff; }
.jm-stat { display: flex; align-items: center; gap: 6px; margin-left: auto; padding-right: 3px; }
.jm-stat svg { width: 22px; height: 20px; }
.jm-stat .led { width: 22px; height: 22px; }
.jm-stat .err { color: #f00; }
.jm-body { flex: 1; display: grid; grid-template-columns: 369px 10px 1fr; min-height: 0; }
.tree { list-style: none; padding-top: 1px; border-right: 1px solid #515151; }
.tree li { display: flex; align-items: center; height: 20px; gap: 4px; }
.tree svg { width: 18px; height: 18px; }
.tree .tw { width: 11px; height: 11px; }
.tree .d0 { margin-left: -4px; }
.tree .d1 { padding-left: 16px; margin-left: 0; border-left: 1px solid #515151; }
.tree .d2 { padding-left: 33px; margin-left: 20px; border-left: 1px solid #515151; }
.tree .on { background: #0d293e; margin-left: 1px; padding-left: 53px; border-left: 0; color: #ccc; }
.grip { display: flex; flex-direction: column; align-items: center; justify-content: center; gap: 3px; padding-top: 30px; border-right: 1px solid #515151; }
.grip i { width: 3px; height: 3px; border-radius: 50%; background: #aaa; }
.jm-main { min-width: 0; }
.jm-main h1 { font-size: 15px; font-weight: 400; line-height: 24px; margin: 11px 0 4px 9px; }
.frow { display: grid; grid-template-columns: 69px 1fr; align-items: center; margin: 0 11px 7px 9px; }
.jm-main input { height: 24px; background: #45494a; border: 1px solid #646464; padding: 0 4px; }
.wr { display: flex; align-items: center; height: 46px; margin: 1px 11px 17px 12px; padding: 0 4px 4px 0; border: 0; border-top: 1px solid #515151; }
.wr legend { height: 16px; line-height: 16px; margin-left: 2px; padding: 0 2px; }
.wr .fn { flex: 1; margin: 0 9px 0 8px; }
.jbtn { width: 81px; height: 24px; background: #4c5052; border: 1px solid #5e6060; border-radius: 3px; }
.jbtn.small { width: 65px; height: 22px; font-size: 9px; }
.log { width: 107px; padding-left: 7px; }
.ck { display: flex; align-items: center; margin-right: 11px; }
.ck input[type=checkbox] { appearance: none; width: 14px; height: 14px; border-radius: 2px; margin: 0 6px 0 0; padding: 0; }
.res-wrap { position: relative; margin-right: 1px; border-bottom: 1px solid #303234; padding-bottom: 2px; }
.res { width: 100%; table-layout: fixed; border-collapse: separate; border-spacing: 0; }
.res .sb { width: 12px; }
.res th { height: 28px; padding: 0; font-weight: 400; background: #45494a; border: 1px solid #303234; border-left: 0; }
.res td { height: 20px; padding: 0 5px; line-height: 18px; text-align: right; border-right: 1px solid #515151; border-bottom: 1px solid #515151; white-space: nowrap; overflow: hidden; }
.res td.l { text-align: left; }
.res td:last-child { border: 0; background: #3c3f41; }
.res .peek td { height: 4px; line-height: 3px; }
.res tr.on td:not(:last-child) { background: #0d293e; }
.res td svg { width: 14px; height: 16px; margin: 0 auto; }
.res-thumb { position: absolute; right: 1px; top: 336px; width: 9px; height: 284px; background: #5b5d5f; }

/* Word */
.word { position: relative; background: #efefef; color: #222; font-size: 12px; min-width: 0; overflow: hidden; }
.w-title { display: flex; height: 43px; align-items: flex-start; color: #aaa; }
.w-title .gem { margin: 7px 14px 0 24px; }
.w-title button { width: 49px; height: 31px; }
.w-title .lit { background: #fff; color: #111; height: 40px; padding-bottom: 8px; }
.w-title svg { width: 14px; height: 14px; }
.w-bar { display: flex; gap: 9px; height: 24px; }
.w-bar button { gap: 4px; border-radius: 4px; }
.w-bar .stub { width: 5px; border: 1px solid #888; border-left: 0; background: #fff; border-radius: 0 4px 4px 0; }
.w-bar .edit { width: 84px; background: #fff; border: 1px solid #888; }
.w-bar .share { width: 80px; background: #185abd; color: #fff; }
.w-bar svg { width: 14px; height: 14px; }
.w-bar .cv { width: 7px; height: 7px; }
.w-ribbon { display: flex; position: relative; height: 100px; margin: 3px 8px 0 0; padding: 5px 0 7px; background: #fff; border-radius: 0 8px 8px 0; box-shadow: 0 1px 4px rgba(0,0,0,.25); }
.w-ed { width: 25px; border-right: 1px solid #d0d0d0; overflow: hidden; }
.w-ed svg { width: 12px; height: 28px; margin: 4px 0; }
.w-add { width: 63px; border-right: 1px solid #d0d0d0; display: flex; flex-direction: column; align-items: center; }
.w-add svg { width: 28px; height: 28px; margin: 4px 0; }
.w-add .g { margin-top: auto; margin-bottom: -5px; }
.w-chev { position: absolute; right: 9px; bottom: 8px; width: 12px; height: 12px; }
.pop { position: absolute; left: 0; top: 127px; width: 31px; height: 634px; background: #f6f6f6; border: 1px solid #b5b5b5; border-left: 0; border-radius: 0 8px 8px 0; box-shadow: 0 8px 26px rgba(0,0,0,.3); overflow: visible; }
.pop-h { height: 39px; background: #e3e3e3; border-bottom: 1px solid #d4d4d4; border-radius: 0 8px 0 0; color: #888; padding: 8px 0 0 1px; }
.pop-h svg { width: 14px; height: 14px; }
.pop-l { height: 55px; border-bottom: 1px solid #d4d4d4; }
.pop-b { height: 33px; width: 17px; margin-top: 10px; border: 1px solid #d4d4d4; border-left: 0; background: #fafafa; padding-top: 12px; }
.pop-b i { display: block; width: 4px; height: 7px; border-radius: 50%; background: #666; }
.pop-k { position: absolute; right: 3px; bottom: 0; width: 22px; height: 23px; background: #c6e2f2; border: 1px solid #1d8ccc; }

/* Chrome */
.chrome { display: flex; flex-direction: column; min-width: 0; background: #fff; color: #3c4043; }
.tabstrip { display: flex; height: 26px; background: #fff; color: #5f6368; background: linear-gradient(#e8eaed, #e8eaed); padding-left: 10px; }
.tabs { display: flex; flex: 0 1 1640px; background: #fff; }
.tab { flex: 1 1 0; min-width: 0; display: flex; align-items: center; height: 26px; padding: 0 10px 8px 11px; gap: 8px; position: relative; background: #e8eaed; }
.tab::after { content: ""; position: absolute; right: 0; top: 0; width: 1px; height: 19px; background: #80868b; }
.tab.nosep::after, .tab.active::after { display: none; }
.tab.nosep { border-radius: 0 0 8px 0; }
.tab.active { background: #fff; color: #45494d; }
.tab.active + .tab { border-radius: 0 0 0 8px; }
.tab span { flex: 1; white-space: nowrap; overflow: hidden; }
.tab .fade { -webkit-mask-image: linear-gradient(to right, #000 85%, transparent); mask-image: linear-gradient(to right, #000 85%, transparent); }
.tab button { width: 12px; }
.tab button svg { width: 10px; height: 10px; }
.newtab { width: 46px; padding-bottom: 8px; }
.newtab svg { width: 14px; height: 14px; }
.tabstrip .win-btns { margin-right: -10px; }
.tabstrip .win-btns button { height: 14px; }
.navbar { display: flex; align-items: center; height: 42px; padding-left: 6px; }
.navbar > button { width: 32px; }
.omni { flex: 1; display: flex; align-items: center; height: 34px; margin-left: 6px; padding: 0 2px 0 12px; border-radius: 17px; background: #f1f3f4; }
.omni .lock { width: 12px; height: 14px; }
.omni .url { flex: 1; margin-left: 10px; font-size: 13px; color: #5f6368; white-space: nowrap; overflow: hidden; }
.omni .url b { font-weight: 400; color: #202124; }
.omni button { width: 32px; }
.exts { display: flex; align-items: center; padding-left: 6px; }
.exts button { width: 32px; }
.exts .ava { width: 24px; height: 24px; }
.exts .update { width: 80px; height: 28px; margin: 0 -1px 0 2px; padding-left: 4px; gap: 16px; border: 1px solid #c5221f; border-radius: 14px; background: #fce8e6; color: #c5221f; }
.exts .update svg { width: 4px; height: 14px; fill: #c5221f; }
.marks { display: grid; grid-template-columns: 98px 103px 150px 102px 63px 108px 145px 97px 83px 72px 62px 134px 1fr; height: 33px; padding: 0 0 4px 16px; border-bottom: 1px solid #d5d7da; }
.marks a { display: flex; align-items: center; gap: 10px; white-space: nowrap; }
.marks svg { width: 12px; height: 14px; }
.marks .fav { margin-left: -2px; gap: 8px; }
.marks .fav svg { width: 16px; height: 16px; }
.rsa { font: 700 6px "Open Sans", sans-serif; fill: #fff; }

/* AWS header */
.aws { display: flex; align-items: center; height: 41px; background: #232f3e; border-bottom: 1px solid #414d5c; color: #fff; font-size: 12px; font-weight: 600; }
.logo { width: 67px; height: 22px; padding-left: 19px; border-right: 1px solid #414d5c; display: flex; flex-direction: column; justify-content: center; }
.logo span { font-size: 16px; line-height: 12px; font-weight: 600; }
.logo svg { width: 32px; height: 9px; }
.svc { gap: 8px; margin-left: 17px; width: 70px; justify-content: flex-start; font-size: 11px; }
.aws-search { display: flex; align-items: center; width: 540px; height: 30px; margin-left: 16px; padding: 0 11px; background: #16191f; border: 1px solid #879596; border-radius: 2px; color: #95a5a6; font-weight: 400; font-size: 13px; }
.aws-search svg { width: 14px; height: 14px; color: #d5dbdb; }
.aws-search input { flex: 1; margin-left: 10px; padding: 0; background: none; border: 0; font-style: italic; }
.aws-search input::placeholder { color: #95a5a6; opacity: 1; }
.aws-r { display: flex; margin-left: auto; }
.aws-r button { width: 50px; height: 22px; border-right: 1px solid #414d5c; }
.aws-r .reg { width: 107px; gap: 8px; font-size: 11px; }
.aws-r .usr { width: 171px; gap: 6px; border: 0; font-size: 11px; }
.aws-r .reg svg, .aws-r .usr svg { width: 9px; height: 9px; }

/* Console */
.console { flex: 1; display: flex; min-height: 0; }
.side { position: relative; flex: 0 0 223px; padding-top: 16px; overflow: hidden; font-size: 14px; color: #545b64; }
.side a { display: block; height: 30px; line-height: 30px; padding-left: 32px; }
.side h3 { display: flex; align-items: center; gap: 8px; height: 31px; margin-top: 12px; padding-left: 13px; font-size: 13px; font-weight: 600; }
.side h3 svg { width: 10px; height: 10px; }
.side .cur { color: #0073bb; font-weight: 600; font-size: 13px; }
.side .new { height: 21px; padding-left: 40px; line-height: 16px; color: #0073bb; font-size: 11px; font-weight: 600; }
.new span { display: inline-block; border-bottom: 1px dashed #0073bb; }
.side-x { position: absolute; right: 21px; top: 22px; }
.vbar { flex: 0 0 17px; display: flex; flex-direction: column; align-items: center; justify-content: space-between; padding: 6px 0; background: #f1f1f1; color: #505050; }
.vbar svg { width: 7px; height: 7px; }
.vbar .up { transform: rotate(180deg); color: #a0a0a0; }
.vbar i { width: 13px; height: 661px; background: #c1c1c1; margin-bottom: auto; margin-top: 4px; }
.ec2 { flex: 1; min-width: 0; display: flex; flex-direction: column; border-left: 1px solid #aab7b8; color: #16191f; }
.ec2-head { display: flex; flex-direction: column; gap: 6px; padding: 10px 9px 9px 19px; background: #fafafa; border-bottom: 1px solid #eaeded; }
.hrow { display: flex; align-items: center; height: 28px; }
.hrow h2 { font-size: 16px; font-weight: 600; }
.hrow h2 span { font-weight: 400; font-size: 18px; color: #687078; }
.info { margin-left: 9px; font-size: 11px; font-weight: 600; color: #0073bb; }
.acts { display: flex; gap: 8px; margin-left: auto; }
.split { display: flex; gap: 2px; }
.btn { height: 28px; gap: 12px; background: #fff; border: 1px solid #545b64; border-radius: 2px; color: #545b64; font-size: 13px; font-weight: 600; }
.btn svg { width: 10px; height: 10px; }
.btn.ref { width: 50px; }
.btn.ref svg { width: 16px; height: 16px; }
.conn { width: 97px; color: #aab7b8; border-color: #d5dbdb; }
.st { width: 156px; }
.ac { width: 113px; }
.pri { background: #ff9d28; border-color: #ff9d28; color: #16191f; }
.la { width: 154px; }
.dd { width: 30px; }
.find { display: flex; align-items: center; width: 648px; height: 28px; padding-left: 8px; background: #fff; border: 1px solid #545b64; border-radius: 2px; color: #687078; }
.find svg { width: 14px; height: 14px; }
.find input { flex: 1; margin-left: 9px; padding: 0; border: 0; background: none; font-size: 13px; font-style: italic; }
.find input::placeholder { color: #687078; opacity: 1; }
.pager { display: flex; align-items: center; margin-left: auto; color: #aab7b8; font-size: 13px; }
.pager b { width: 38px; text-align: center; font-weight: 400; color: #16191f; }
.pager .cfg { width: 35px; height: 28px; margin-left: 11px; padding-left: 8px; border-left: 1px solid #eaeded; color: #545b64; }
.inst { width: 100%; table-layout: fixed; border-collapse: separate; border-spacing: 0; font-size: 13px; }
.c0 { width: 52px; } .c1 { width: 141px; } .c2 { width: 200px; } .c3 { width: 160px; } .c4 { width: 150px; } .c6 { width: 130px; } .c7 { width: 170px; }
.inst th { height: 33px; padding: 0; background: #fafafa; border-bottom: 1px solid #eaeded; color: #545b64; font-weight: 600; text-align: left; }
.inst th div { display: flex; align-items: center; height: 20px; padding: 0 14px 0 16px; border-right: 1px solid #545b64; white-space: nowrap; }
.inst .so { width: 10px; height: 10px; margin-left: auto; }
.inst .pen { width: 14px; height: 14px; margin-left: 6px; }
.inst input { appearance: none; display: block; width: 14px; height: 14px; margin: 0 0 0 19px; border: 1px solid #687078; border-radius: 2px; background: #fff; }
.inst td { height: 34px; padding: 0 0 0 16px; border-bottom: 1px solid #eaeded; line-height: 20px; white-space: nowrap; overflow: hidden; }
.inst tr:nth-child(odd) td { height: 33px; }
.inst td:first-child { padding: 0; }
.inst td a { color: #0073bb; font-size: 14px; }
.inst td div { display: flex; align-items: center; gap: 4px; color: #687078; }
.inst td.al div { color: #16191f; gap: 15px; }
.inst .al svg { color: #545b64; }
.inst .zz { display: flex; gap: 8px; margin-left: 2px; color: #545b64; }
.inst td .run { color: #1d8102; }
.inst .run .zz { margin-left: 9px; }
.inst .stopped .zz { margin-left: 14px; }
.hbar { display: flex; align-items: center; height: 17px; background: #f1f1f1; color: #a0a0a0; }
.hbar svg { width: 7px; height: 7px; margin: 0 5px 0 4px; transform: rotate(90deg); }
.hbar i { width: 700px; height: 13px; background: #c1c1c1; }
.gapband { height: 102px; background: #f2f3f3; border-top: 1px solid #879596; border-bottom: 1px solid #d0d4d4; }
.panel { display: flex; align-items: center; gap: 5px; height: 54px; padding: 0 5px 0 20px; color: #545b64; }
.panel h2 { flex: 1; font-size: 16px; font-weight: 600; color: #16191f; }
.panel button { width: 32px; }

/* Clock */
.clock { position: absolute; z-index: 3; left: 67.3%; top: 468px; width: 728px; height: 501px; display: grid; grid-template-columns: 49px 1fr; background: #f8f9fd; border: 1px solid #a5a8ab; border-radius: 8px; box-shadow: 0 16px 36px rgba(0,0,0,.42); color: #1b1b1b; overflow: hidden; }
.ck-side { display: flex; flex-direction: column; align-items: center; gap: 4px; padding: 0 0 5px; background: #eff3fb; border-right: 1px solid #e3e6ee; }
.ck-side button { position: relative; width: 40px; height: 36px; border-radius: 4px; }
.ck-side .menu { height: 34px; }
.ck-side .on { background: #e6e8ee; }
.ck-side .on::before { content: ""; position: absolute; left: 0; top: 10px; width: 3px; height: 16px; border-radius: 2px; background: #0067c0; }
.bf { display: flex; align-items: center; justify-content: center; width: 24px; height: 24px; margin: auto 0 8px; border-radius: 50%; background: #d9dbe0; font-size: 9px; font-weight: 600; }
.ck-main { display: flex; flex-direction: column; align-items: center; }
.ck-main header { align-self: stretch; display: flex; align-items: center; height: 35px; padding-left: 7px; }
.ck-main header span { margin-left: 14px; }
.ck-tools { display: flex; gap: 24px; align-self: flex-end; margin: 69px 89px 0 0; }
.time { display: grid; grid-template-columns: repeat(7, auto); align-items: baseline; font-size: 102px; line-height: 90px; margin-right: 6px; }
.time .cs { font-size: 74px; }
.time small { grid-row: 2; justify-self: center; font-size: 18px; line-height: 28px; }
.time .u1 { grid-column: 1; } .time .u2 { grid-column: 3; } .time .u3 { grid-column: 5; }
.ctl { display: flex; gap: 26px; margin-top: 42px; }
.ctl button { width: 66px; height: 66px; border-radius: 50%; background: #fdfdfd; border: 1px solid #e6e7ea; border-bottom-color: #c8c9cc; }
.ctl svg { width: 23px; height: 23px; }
.ctl .go { background: #0067c0; border-color: #0067c0; }
```
FILE: app.js
```js
const samples = [
  [39,'14:36:26.070',60087,292],[40,'14:37:27.168',215,337,124],[41,'14:37:28.396',90,337],[42,'14:37:29.489',93,337],
  [43,'14:37:30.584',92,337],[44,'14:37:31.690',91,337],[45,'14:37:32.782',89,337],[46,'14:37:33.874',90,337],
  [47,'14:37:34.966',91,337],[48,'14:37:36.058',91,337],[49,'14:37:37.164',91,337],[50,'14:37:38.257',94,337],
  [51,'14:37:39.364',90,337],[52,'14:37:40.467',90,337],[53,'14:37:41.559',92,337],[54,'14:37:42.663',91,337],
  [55,'14:37:43.755',91,337],[56,'14:37:44.847',91,277],[57,'14:37:45.939',91,277],[58,'14:37:47.032',90,277],
  [59,'14:37:48.134',90,277],[60,'14:37:49.235',93,277],[61,'14:37:50.339',92,277],[62,'14:37:51.444',90,277],
  [63,'14:37:52.549',93,277],[64,'14:37:53.644',92,277],[65,'14:37:54.751',90,277],[66,'14:37:55.849',90,277],
  [67,'14:37:56.941',90,277],[68,'14:37:58.047',91,277],[69,'14:37:59.152',98,277],[70,'14:38:00.258',856,651,0,855],
  [71,'14:38:02.118',106,651],[72,'14:38:03.238',106,651],[73,'14:38:04.358',107,651]
];
document.getElementById('samples').innerHTML =
  '<tr class="peek">' + '<td></td>'.repeat(11) + '</tr>' +
  samples.map(([n, start, ms, bytes, connect = 0, latency = ms]) =>
    `<tr${n === 70 ? ' class="on"' : ''}><td>${n}</td><td>${start}</td><td class="l">Thread Group 1-1</td><td class="l">MastersTestAPI</td><td>${ms}</td>` +
    `<td><svg><use href="#${bytes === 651 ? 'i-good' : 'i-bad'}"/></svg></td><td>${bytes}</td><td>182</td><td>${latency}</td><td>${connect}</td><td></td></tr>`).join('');

const instances = [
  ['i-0b6789b99eff4dd02','Terminated','us-east-1a'],['i-0066d57ab11e8deeb','Terminated','us-east-1b'],
  ['i-01e1d011a6dab6dd9','Running','us-east-1b','ec2-3-85-82-242.comp...','3.85.82.242'],
  ['i-081834949cbbd4fe3','Terminated','us-east-1b'],['i-006f5338ba7e2a0b1','Stopped','us-east-1b'],
  ['i-0f7325978b3bde81e','Terminated','us-east-1b'],['i-02e1667d27f4aa73b','Terminated','us-east-1b'],
  ['i-073295a7003e9b9b9','Terminated','us-east-1b'],['i-09386aec6d47e1d3e','Stopped','us-east-1b']
];
const stateClass = { Running: 'run', Stopped: 'stopped', Terminated: 'terminated' };
document.getElementById('instances').innerHTML = instances.map(([id, state, zone, dns = '–', ip = '–']) => {
  const run = state === 'Running';
  return `<tr><td><input type="checkbox" aria-label="Select ${id}"></td><td></td><td><a href="#">${id}</a></td>` +
    `<td><div class="${stateClass[state]}"><svg><use href="#${run ? 'i-ok-c' : 'i-minus-c'}"/></svg>${state}<span class="zz"><svg><use href="#i-zin"/></svg><svg><use href="#i-zout"/></svg></span></div></td>` +
    `<td>t2.micro</td><td>${run ? '<div><svg><use href="#i-clk-c"/></svg>Initializing</div>' : '–'}</td>` +
    `<td class="al"><div>No alarms<svg><use href="#i-plus"/></svg></div></td><td>${zone}</td><td>${dns}</td><td>${ip}</td><td>–</td><td></td></tr>`;
}).join('');
```
